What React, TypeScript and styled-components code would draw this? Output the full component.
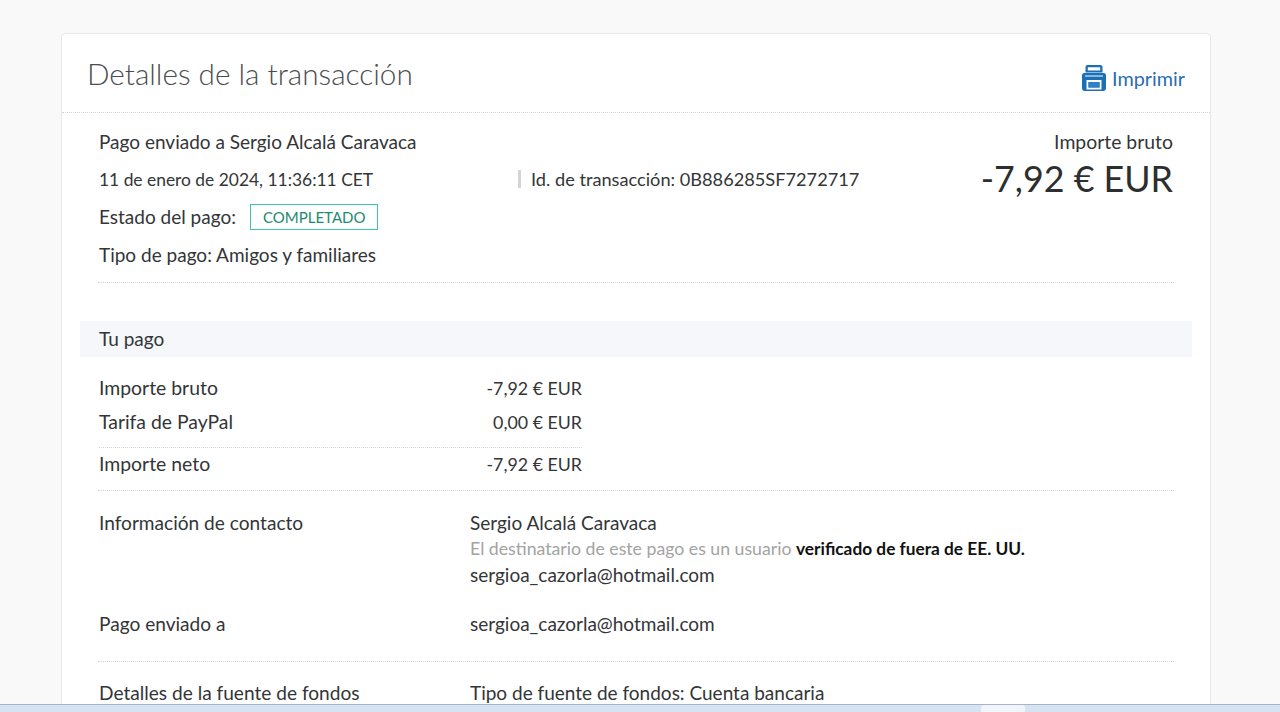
import React from 'react'
import styled, { createGlobalStyle } from 'styled-components'

const GlobalStyle = createGlobalStyle`
  html, body {
    margin: 0;
    height: 100%;
    overflow: hidden;
    background: #f9f9f9;
  }
  body {
    font-family: Lato, "Open Sans", sans-serif;
    color: #2c2e2f;
  }
`

function PrintIcon() {
  return (
    <svg width="24" height="26" viewBox="0 0 24 26">
      <path
        fill="#1a6fb5"
        fillRule="evenodd"
        d="M3.500 2Q3.500 0 5.500 0h13q2 0 2 2v5.500H3.500zM5.800 2.200v3.300h12.400V2.200zM2.500 8h19Q24 8 24 10.500V23q0 3-3 3H3q-3 0-3-3V10.500Q0 8 2.500 8zM3 10.500v1h18v-1zM4.500 15v9.500h15V15zM6.500 17h11v5.500h-11z"
      />
      <rect x="6.500" y="17" width="11" height="5.500" fill="#2f80c4" />
    </svg>
  )
}

function App() {
  return (
    <>
      <GlobalStyle />
      <Page>
        <Card>
          <Header>
            <Title>Detalles de la transacción</Title>
            <PrintLink>
              <PrintIcon />
              Imprimir
            </PrintLink>
          </Header>

          <Summary>
            <SummaryInfo>
              <SummaryLine>Pago enviado a Sergio Alcalá Caravaca</SummaryLine>
              <SummaryLine>
                <DateText>11 de enero de 2024, 11:36:11 CET</DateText>
                <TransactionId>Id. de transacción: 0B886285SF7272717</TransactionId>
              </SummaryLine>
              <SummaryLine>
                Estado del pago:
                <StatusBadge>COMPLETADO</StatusBadge>
              </SummaryLine>
              <SummaryLine>Tipo de pago: Amigos y familiares</SummaryLine>
            </SummaryInfo>
            <GrossBlock>
              <GrossLabel>Importe bruto</GrossLabel>
              <GrossAmount>-7,92 € EUR</GrossAmount>
            </GrossBlock>
          </Summary>

          <SectionBand>Tu pago</SectionBand>

          <Amounts>
            <AmountRow>
              <AmountLabel>Importe bruto</AmountLabel>
              <span>-7,92 € EUR</span>
            </AmountRow>
            <AmountRow>
              <AmountLabel>Tarifa de PayPal</AmountLabel>
              <span>0,00 € EUR</span>
            </AmountRow>
            <AmountRow $total>
              <AmountLabel>Importe neto</AmountLabel>
              <span>-7,92 € EUR</span>
            </AmountRow>
          </Amounts>

          <DetailSection>
            <DetailRow $height={101}>
              <DetailLabel>Información de contacto</DetailLabel>
              <div>
                <DetailValue>Sergio Alcalá Caravaca</DetailValue>
                <VerifiedNote>
                  El destinatario de este pago es un usuario <strong>verificado de fuera de EE. UU.</strong>
                </VerifiedNote>
                <DetailValue>sergioa_cazorla@hotmail.com</DetailValue>
              </div>
            </DetailRow>
            <DetailRow $height={69}>
              <DetailLabel>Pago enviado a</DetailLabel>
              <DetailValue>sergioa_cazorla@hotmail.com</DetailValue>
            </DetailRow>
          </DetailSection>

          <DetailSection>
            <DetailRow $height={60} $top={18}>
              <DetailLabel>Detalles de la fuente de fondos</DetailLabel>
              <DetailValue>Tipo de fuente de fondos: Cuenta bancaria</DetailValue>
            </DetailRow>
          </DetailSection>
        </Card>
      </Page>
      <Taskbar>
        <TaskbarTab />
      </Taskbar>
    </>
  )
}

export default App

const Page = styled.main`
  height: 704px;
  padding: 33px 69px 0 61px;
  box-sizing: border-box;
  overflow: hidden;
`

const Card = styled.section`
  background: #fff;
  border: 1px solid #e8e8e8;
  border-radius: 4px;
  min-height: 800px;
`

const Header = styled.header`
  height: 78px;
  padding: 0 25px;
  display: flex;
  align-items: center;
  justify-content: space-between;
  border-bottom: 1px dotted #d5d5d5;
`

const Title = styled.h1`
  margin: 0;
  font-size: 29.700px;
  font-weight: 300;
  color: #4a4d4e;
`

const PrintLink = styled.a`
  display: flex;
  align-items: center;
  gap: 6px;
  margin-top: 10px;
  font-size: 19.800px;
  color: #2a6db0;
`

const Summary = styled.div`
  margin: 0 36px;
  padding: 10px 1px 0;
  height: 170px;
  box-sizing: border-box;
  display: flex;
  justify-content: space-between;
  border-bottom: 1px dotted #d5d5d5;
`

const SummaryInfo = styled.div`
  display: flex;
  flex-direction: column;
`

const SummaryLine = styled.div`
  display: flex;
  align-items: center;
  height: 37.600px;
  font-size: 19px;
  color: #333537;
`

const DateText = styled.span`
  width: 419px;
  font-size: 17.400px;
`

const TransactionId = styled.span`
  padding-left: 10px;
  border-left: 3px solid #d5d5d5;
  font-size: 18.200px;
  line-height: 18px;
`

const StatusBadge = styled.span`
  margin-left: 14px;
  padding: 0 12px;
  height: 24px;
  line-height: 24px;
  border: 1px solid #3ec3ae;
  font-size: 15px;
  color: #1c8a6e;
`

const GrossBlock = styled.div`
  text-align: right;
`

const GrossLabel = styled.div`
  height: 37.600px;
  line-height: 37.600px;
  font-size: 19.400px;
  color: #333537;
`

const GrossAmount = styled.div`
  font-size: 35.800px;
  line-height: 36px;
  color: #2c2e2f;
`

const SectionBand = styled.h2`
  margin: 38px 18px 0;
  padding: 0 19px;
  height: 36px;
  line-height: 36px;
  background: #f5f7fa;
  font-size: 19px;
  font-weight: 400;
  color: #333537;
`

const Amounts = styled.div`
  margin: 14px 36px 0;
  border-bottom: 1px dotted #d5d5d5;
  padding: 0 1px 9px;
`

const AmountRow = styled.div<{ $total?: boolean }>`
  width: 483px;
  display: flex;
  justify-content: space-between;
  align-items: baseline;
  height: ${p => (p.$total ? '33px' : '34px')};
  line-height: ${p => (p.$total ? '32px' : '34px')};
  font-size: 17.800px;
  color: #333537;
  ${p => p.$total && 'margin-top: 8px; border-top: 1px dotted #d5d5d5;'}
`

const AmountLabel = styled.span`
  font-size: 19.400px;
`

const DetailSection = styled.div`
  margin: 0 36px;
  padding: 0 1px;
  border-bottom: 1px dotted #d5d5d5;
`

const DetailRow = styled.div<{ $height: number; $top?: number }>`
  display: grid;
  grid-template-columns: 371px 1fr;
  height: ${p => p.$height}px;
  padding-top: ${p => p.$top ?? 19}px;
  box-sizing: border-box;
`

const DetailLabel = styled.div`
  font-size: 19.100px;
  line-height: 26px;
  color: #333537;
`

const DetailValue = styled.div`
  font-size: 19px;
  line-height: 26px;
  color: #333537;
`

const VerifiedNote = styled.div`
  font-size: 17.700px;
  line-height: 26px;
  color: #a3a3a3;

  strong {
    font-size: 17.300px;
    font-weight: 700;
    color: #111;
  }
`

const Taskbar = styled.footer`
  height: 8px;
  background: #d6e3f3;
  border-top: 1px solid #a9b5c6;
  box-sizing: border-box;
  display: flex;
  justify-content: flex-end;
  padding-right: 255px;
`

const TaskbarTab = styled.div`
  width: 44px;
  height: 7px;
  background: #f1f4f8;
  border-radius: 3px 3px 0 0;
`
